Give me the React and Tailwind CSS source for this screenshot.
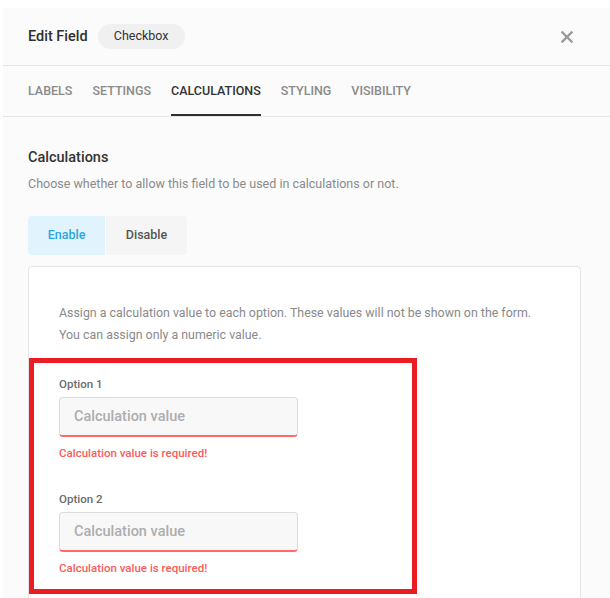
const options = ["Option 1", "Option 2"];

const tabs = ["Labels", "Settings", "Calculations", "Styling", "Visibility"];

function CloseIcon() {
	return (
		<svg width="12" height="12" viewBox="0 0 12 12" fill="none">
			<path d="M1.5 1.5l9 9M10.5 1.5l-9 9" stroke="#9a9a9a" strokeWidth="2.4" strokeLinecap="square" />
		</svg>
	);
}

export default function App() {
	return (
		<div
			className="min-h-screen bg-white pl-[3px] pt-2"
			style={{ fontFamily: "Roboto, 'Liberation Sans', sans-serif" }}
		>
			<div className="min-h-[590px] overflow-hidden bg-[#fbfbfb]">
				<header className="flex h-[58px] items-center border-b border-[#e6e6e6] pl-[25px] pr-[31px]">
					<h1 className="text-[14.5px] font-medium text-[#2f2f2f]">Edit Field</h1>
					<span className="ml-[10px] flex h-[25px] w-[87px] items-center justify-center rounded-full bg-[#f0f0f0] text-[12.5px] text-[#333]">
						Checkbox
					</span>
					<button type="button" className="ml-auto flex h-6 w-6 items-center justify-center">
						<CloseIcon />
					</button>
				</header>

				<nav className="flex h-[51px] gap-5 border-b border-[#e6e6e6] pl-[25px] pt-[3px]">
					{tabs.map((tab) => {
						const isActive = tab === "Calculations";
						return (
							<div
								key={tab}
								className={`flex items-center border-b-2 text-[12.5px] font-medium uppercase ${
									isActive ? "border-[#2f2f2f] text-[#333]" : "border-transparent text-[#8a8a8a]"
								}`}
							>
								{tab}
							</div>
						);
					})}
				</nav>

				<main className="px-[25px] pt-[31px]">
					<h2 className="text-[14.5px] font-medium leading-5 text-[#333]">Calculations</h2>
					<p className="mt-[6px] text-[12.5px] leading-5 text-[#8a8a8a]">
						Choose whether to allow this field to be used in calculations or not.
					</p>

					<div className="mt-[22px] flex gap-px">
						<button
							type="button"
							className="h-[39px] w-[77px] rounded-l bg-[#e1f4fd] text-[12.5px] font-medium text-[#2aa6df]"
						>
							Enable
						</button>
						<button
							type="button"
							className="h-[39px] w-[81px] rounded-r bg-[#f5f5f5] text-[12.5px] font-medium text-[#555]"
						>
							Disable
						</button>
					</div>

					<section className="mt-[11px] w-[553px] rounded border border-[#e4e4e4] bg-white px-[30px] pb-10 pt-[35px]">
						<p className="text-[12.4px] leading-[22px] text-[#8a8a8a]">
							Assign a calculation value to each option. These values will not be shown on the form.
							<br />
							You can assign only a numeric value.
						</p>

						<div className="-ml-[30px] mt-[12px] w-[388px] border-[5px] border-[#ec1c24] pb-[13px] pl-[25px] pt-[13px]">
							{options.map((option, index) => (
								<div key={option} className={index > 0 ? "mt-[30px]" : ""}>
									<label className="block text-[11.5px] font-medium leading-4 text-[#6b6b6b]">
										{option}
									</label>
									<input
										type="text"
										placeholder="Calculation value"
										className="mt-[5px] block h-[40px] w-[239px] rounded border border-[#dcdcdc] border-b-2 border-b-[#ff6b6b] bg-[#f8f8f8] pl-[14px] text-[14.5px] font-medium text-[#333] outline-none placeholder:text-[#adadad]"
									/>
									<p className="mt-[8px] text-[11.5px] font-medium leading-4 text-[#f75c5c]">
										Calculation value is required!
									</p>
								</div>
							))}
						</div>
					</section>
				</main>
			</div>
		</div>
	);
}
